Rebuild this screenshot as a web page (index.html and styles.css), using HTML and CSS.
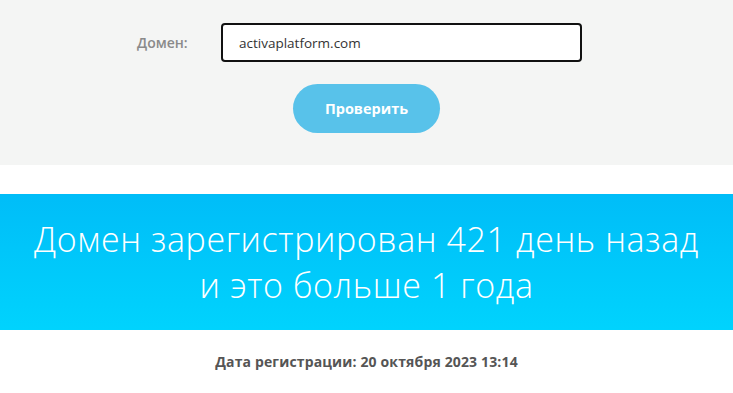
FILE: index.html
```html
<!DOCTYPE html>
<html lang="ru">
<head>
    <meta charset="UTF-8">
    <meta name="viewport" content="width=device-width, initial-scale=1.0">
    <title>Проверка возраста домена</title>
    <link rel="stylesheet" href="styles.css">
</head>
<body>
    <div class="check-form">
        <div class="check-row">
            <label class="check-label" for="domain">Домен:</label>
            <input id="domain" class="check-input" type="text" value="activaplatform.com" spellcheck="false">
        </div>
        <button class="check-button">Проверить</button>
    </div>

    <div class="result-banner">
        <div class="result-text">Домен зарегистрирован 421 день назад<br>и это больше 1 года</div>
    </div>

    <div class="result-date">Дата регистрации: 20 октября 2023 13:14</div>
</body>
</html>
```

FILE: styles.css
```css
body {
    margin: 0;
    background: #ffffff;
    font-family: "Open Sans", "Noto Sans", sans-serif;
}

.check-form {
    background: #f4f5f4;
    height: 165px;
    box-sizing: border-box;
    padding-top: 23px;
    display: flex;
    flex-direction: column;
    align-items: center;
}

.check-row {
    display: flex;
    align-items: center;
    margin-right: 14px;
}

.check-label {
    width: 84px;
    font-size: 14px;
    font-weight: 600;
    color: #8a8a8a;
}

.check-input {
    width: 361px;
    height: 39px;
    box-sizing: border-box;
    border: 2px solid #111111;
    border-radius: 4px;
    padding: 0 16px;
    background: #ffffff;
    font-family: inherit;
    font-size: 13.5px;
    color: #333333;
    outline: none;
}

.check-button {
    margin-top: 22px;
    width: 147px;
    height: 49px;
    border: none;
    border-radius: 25px;
    background: #58c2ea;
    color: #ffffff;
    font-family: inherit;
    font-size: 14.5px;
    font-weight: 700;
}

.result-banner {
    margin-top: 29px;
    height: 136px;
    display: flex;
    align-items: center;
    justify-content: center;
    background: linear-gradient(#00bdf8, #00d3fd);
}

.result-text {
    text-align: center;
    color: #ffffff;
    font-weight: 300;
    font-size: 34px;
    letter-spacing: 0.6px;
    line-height: 46px;
}

.result-date {
    padding-top: 22px;
    text-align: center;
    font-size: 14px;
    font-weight: 700;
    letter-spacing: 0.15px;
    color: #555555;
}
```
